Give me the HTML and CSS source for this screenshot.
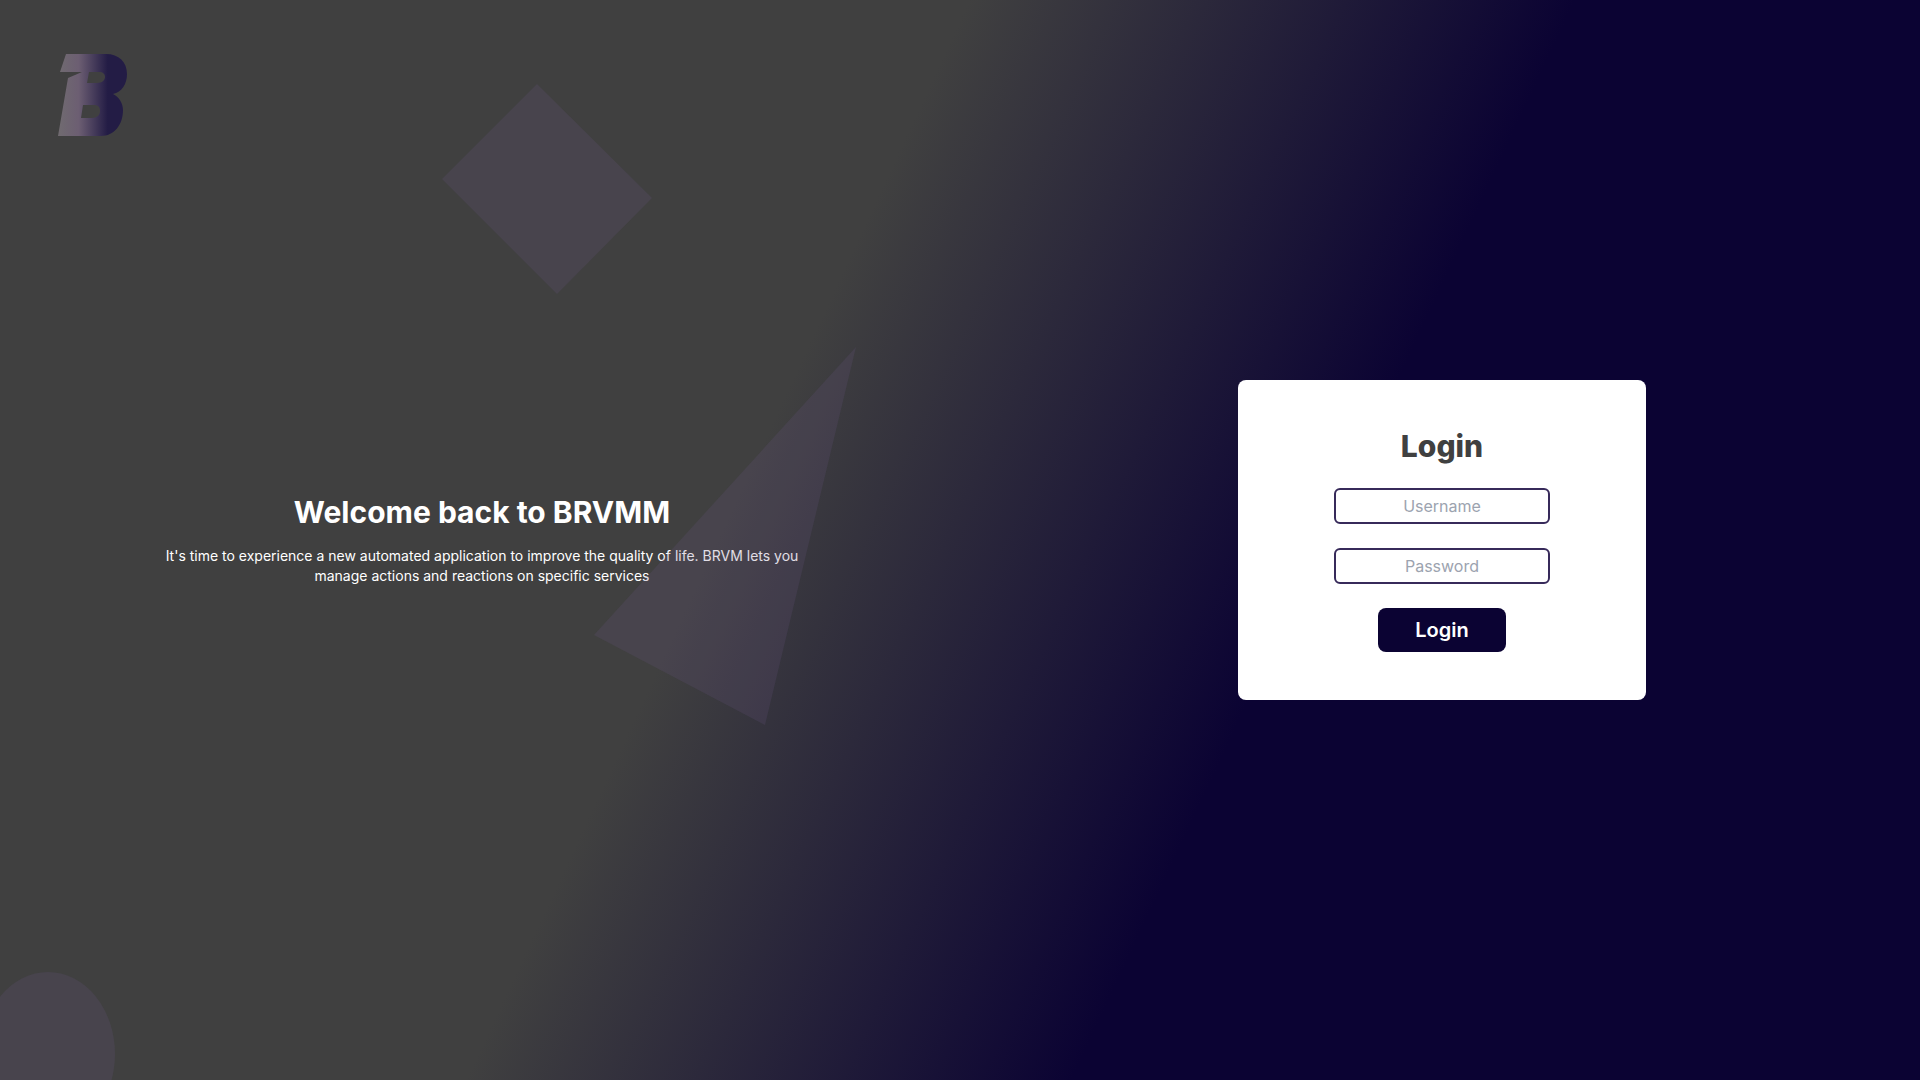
FILE: index.html
```html
<!DOCTYPE html>
<html lang="en">
<head>
  <meta charset="utf-8">
  <meta name="viewport" content="width=device-width, initial-scale=1">
  <title>BRVM - Login</title>
  <link rel="stylesheet" href="styles.css">
</head>
<body>
  <main class="page">
    <section class="intro">
      <h1 class="title">Welcome back to BRVMM</h1>
      <p class="lead">It's time to experience a new automated application to improve the quality of life. BRVM lets you manage actions and reactions on specific services</p>
    </section>
    <section class="access">
      <form class="card">
        <h2 class="title card-title">Login</h2>
        <input class="field" type="text" name="username" placeholder="Username" aria-label="Username">
        <input class="field" type="password" name="password" placeholder="Password" aria-label="Password">
        <button class="submit" type="submit">Login</button>
      </form>
    </section>
  </main>
  <svg class="shapes" viewBox="0 0 1920 1080" preserveAspectRatio="none" aria-hidden="true">
    <g fill="#685481" fill-opacity=".2">
      <path d="M537 84 652 198 557 294 442 179z"/>
      <path d="M856 347 765 725 594 635z"/>
      <ellipse cx="48" cy="1054" rx="67" ry="82"/>
    </g>
  </svg>
  <svg class="logo" viewBox="0 0 70 84" role="img" aria-label="BRVM">
    <defs>
      <linearGradient id="logo-fill">
        <stop offset="0" stop-color="#706b70"/>
        <stop offset=".3" stop-color="#6c5e72"/>
        <stop offset=".72" stop-color="#231c45"/>
        <stop offset="1" stop-color="#231c45"/>
      </linearGradient>
    </defs>
    <path fill="url(#logo-fill)" fill-rule="evenodd" d="M8 1H48C61 1 69 9 69 21 69 31 64 39 55 41 61 44 65 50 65 57 65 72 56 83 43 83H0L10 25 24 19H2zM31 19 29 30H39C44 30 47 27 47 24 47 21 45 19 41 19zM25 52 23 65H34C39 65 42 62 42 58 42 54 40 52 36 52z"/>
  </svg>
</body>
</html>
```

FILE: styles.css
```css
* {
  box-sizing: border-box;
}

body {
  position: relative;
  margin: 0;
  min-height: 100vh;
  overflow-x: hidden;
  background: linear-gradient(115deg, #404040 40%, #0b0333 65%);
  color: #fff;
  font-family: Inter, "Liberation Sans", sans-serif;
}

.page {
  display: grid;
  grid-template-columns: 1fr 1fr;
  min-height: 100vh;
}

.intro,
.access {
  display: flex;
  flex-direction: column;
  align-items: center;
  justify-content: center;
  padding-left: 4px;
}

.intro {
  gap: 16px;
  text-align: center;
}

.title {
  margin: 0;
  font-size: 30px;
  font-weight: 700;
  line-height: 36px;
}

.lead {
  margin: 0;
  max-width: 640px;
  font-size: 14px;
  line-height: 20px;
}

.card {
  display: flex;
  flex-direction: column;
  align-items: center;
  gap: 24px;
  padding: 48px 96px;
  border-radius: 8px;
  background: #fff;
}

.card-title {
  color: #404040;
  font-weight: 800;
}

.field {
  width: 216px;
  height: 36px;
  padding: 4px 8px;
  border: 2px solid #372a5a;
  border-radius: 6px;
  background: #fff;
  color: #404040;
  font: inherit;
  font-size: 16px;
  text-align: center;
}

.field::placeholder {
  color: #9ca3af;
}

.submit {
  width: 128px;
  padding: 8px;
  border: 0;
  border-radius: 8px;
  background: #0b0333;
  color: #fff;
  font: inherit;
  font-size: 20px;
  font-weight: 600;
  line-height: 28px;
}

.shapes {
  position: absolute;
  inset: 0;
  width: 100%;
  height: 100%;
  pointer-events: none;
}

.logo {
  position: absolute;
  top: 53px;
  left: 58px;
  width: 70px;
  height: 84px;
}
```
